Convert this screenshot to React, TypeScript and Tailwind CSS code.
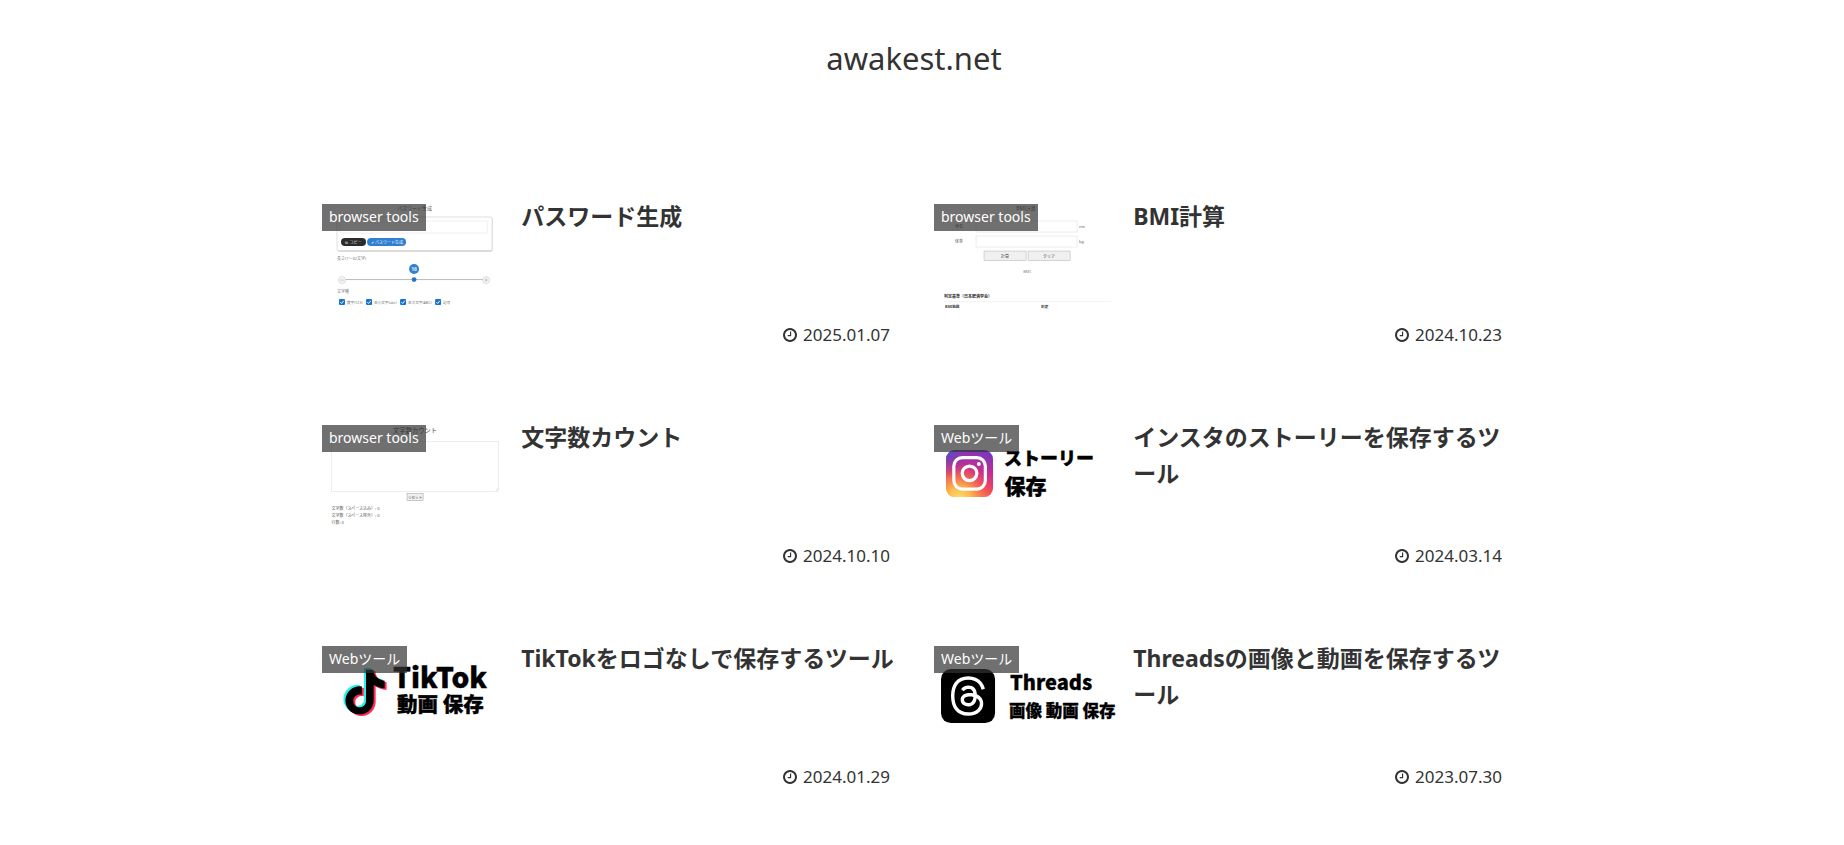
import type { ReactNode } from "react";
import { FaThreads } from "react-icons/fa6";
import { SiTiktok } from "react-icons/si";

const POP = "[font-family:'Noto_Sans_CJK_JP',sans-serif] font-black";
const TINY = "[font-family:'Noto_Sans','Noto_Sans_CJK_JP',sans-serif]";

function Thumb({ label, className, children }: { label: string; className: string; children: ReactNode }) {
  return (
    <svg viewBox="0 0 188 106" role="img" aria-label={label} className={`block w-full ${className}`}>
      {children}
    </svg>
  );
}

function PasswordThumb() {
  const checks = [
    { x: 17, label: "数字(123)" },
    { x: 44, label: "英小文字(abc)" },
    { x: 78, label: "英大文字(ABC)" },
    { x: 113, label: "記号" },
  ];
  return (
    <Thumb label="パスワード生成" className={TINY}>
      <text x="75" y="6" fontSize="5" fill="#555">パスワード生成</text>
      <rect x="15.5" y="14" width="155" height="34" rx="2" fill="#bbb" opacity="0.5" />
      <rect x="15" y="13" width="155" height="33.5" rx="2" fill="#fff" stroke="#d6d6d6" strokeWidth="0.8" />
      <rect x="18" y="17" width="147" height="12" fill="#fff" stroke="#e6e6e6" strokeWidth="0.6" />
      <rect x="19" y="34" width="25" height="8" rx="4" fill="#2b2b2b" />
      <text x="31.5" y="39.6" fontSize="4" fill="#ddd" textAnchor="middle">⧉ コピー</text>
      <rect x="45" y="34" width="39" height="8" rx="4" fill="#2f80d0" />
      <text x="65" y="39.6" fontSize="4" fill="#e4f0fc" textAnchor="middle">✔ パスワード生成</text>
      <text x="15" y="56" fontSize="4" fill="#777">長さ(1〜32文字)</text>
      <path d="M20 75.5H164" stroke="#aaa" strokeWidth="0.8" />
      <circle cx="20" cy="76" r="3.5" fill="#f4f4f4" stroke="#ccc" strokeWidth="0.6" />
      <circle cx="164" cy="76" r="3.5" fill="#f4f4f4" stroke="#ccc" strokeWidth="0.6" />
      <path d="M18.5 76h3M162.5 76h3M164 74.5v3" stroke="#999" strokeWidth="0.5" />
      <circle cx="92" cy="65" r="5" fill="#2f80d0" />
      <text x="92" y="67" fontSize="5" fontWeight="700" fill="#e4f0fc" textAnchor="middle">16</text>
      <circle cx="92" cy="75.5" r="2.4" fill="#2f72bd" />
      <text x="15" y="89" fontSize="4" fill="#777">文字種</text>
      {checks.map((c) => (
        <g key={c.x}>
          <rect x={c.x} y="95" width="6" height="6" rx="1" fill="#1673d1" />
          <path d={`M${c.x + 1.3} 98l1.3 1.4 2.2-2.8`} fill="none" stroke="#fff" strokeWidth="0.9" />
          <text x={c.x + 8} y="99.8" fontSize="3.6" fill="#777">{c.label}</text>
        </g>
      ))}
    </Thumb>
  );
}

function BmiThumb() {
  return (
    <Thumb label="BMI計算" className={TINY}>
      <text x="92" y="6" fontSize="5" fill="#555" textAnchor="middle">BMI計算</text>
      <g fill="#fff" stroke="#e4e4e4" strokeWidth="0.7">
        <rect x="42" y="17" width="101" height="11" />
        <rect x="42" y="32" width="101" height="11" />
      </g>
      <g fontSize="4" fill="#555">
        <text x="21" y="24">身長</text>
        <text x="21" y="39">体重</text>
        <text x="145" y="24">cm</text>
        <text x="145" y="39">kg</text>
      </g>
      <g fill="#f0f0f0" stroke="#bbb" strokeWidth="0.6">
        <rect x="50" y="47" width="42" height="9.5" />
        <rect x="94" y="47" width="42" height="9.5" />
      </g>
      <g fontSize="4" fill="#444" textAnchor="middle">
        <text x="71" y="53.5">計算</text>
        <text x="115" y="53.5">クリア</text>
        <text x="93" y="68.5" fill="#888">BMI</text>
      </g>
      <text x="10" y="93.8" fontSize="4" fontWeight="700" fill="#333">判定基準（日本肥満学会）</text>
      <path d="M10 97.5H177" stroke="#ececec" strokeWidth="0.6" />
      <text x="11" y="103.5" fontSize="3.6" fontWeight="700" fill="#444">BMI範囲</text>
      <text x="107" y="103.5" fontSize="3.6" fontWeight="700" fill="#444">判定</text>
    </Thumb>
  );
}

function CountThumb() {
  return (
    <Thumb label="文字数カウント" className={TINY}>
      <text x="71" y="7.5" fontSize="6.3" fill="#444">文字数カウント</text>
      <rect x="9.5" y="16.5" width="167" height="50" fill="#fff" stroke="#e6e6e6" strokeWidth="0.7" />
      <path d="M174 65.5l2-2" stroke="#999" strokeWidth="0.5" />
      <rect x="85" y="68.5" width="16" height="7" fill="#f0f0f0" stroke="#aaa" strokeWidth="0.6" />
      <text x="93" y="73.5" fontSize="3.6" fill="#444" textAnchor="middle">リセット</text>
      <g fontSize="4" fill="#555">
        <text x="9.5" y="85">文字数（スペース込み）: 0</text>
        <text x="9.5" y="91.8">文字数（スペース除外）: 0</text>
        <text x="9.5" y="98.7">行数: 0</text>
      </g>
    </Thumb>
  );
}

function InstagramThumb() {
  return (
    <Thumb label="ストーリー 保存" className={POP}>
      <defs>
        <linearGradient id="ig-base" x1="0.7" y1="0" x2="0.3" y2="1">
          <stop offset="0" stopColor="#7a35c0" />
          <stop offset="0.35" stopColor="#c52d92" />
          <stop offset="0.65" stopColor="#f0485a" />
          <stop offset="1" stopColor="#fb9a3c" />
        </linearGradient>
        <radialGradient id="ig-warm" cx="0.27" cy="1.05" r="0.75">
          <stop offset="0" stopColor="#ffe070" />
          <stop offset="0.35" stopColor="#fdb84c" />
          <stop offset="1" stopColor="#f0485a" stopOpacity="0" />
        </radialGradient>
        <radialGradient id="ig-cool" cx="0" cy="0" r="0.6">
          <stop offset="0" stopColor="#4452cf" />
          <stop offset="1" stopColor="#7a35c0" stopOpacity="0" />
        </radialGradient>
      </defs>
      <rect x="12" y="25" width="47" height="47" rx="9" fill="url(#ig-base)" />
      <rect x="12" y="25" width="47" height="47" rx="9" fill="url(#ig-warm)" />
      <rect x="12" y="25" width="47" height="47" rx="9" fill="url(#ig-cool)" />
      <g fill="none" stroke="#fff" strokeWidth="3.2">
        <rect x="19.8" y="32.5" width="31.5" height="31.5" rx="8.5" />
        <circle cx="35.5" cy="48.3" r="7.3" />
      </g>
      <circle cx="44.8" cy="39" r="2" fill="#fff" />
      <g fill="#000" stroke="#000" strokeWidth="0.4">
        <text x="70" y="39.5" fontSize="18">ストーリー</text>
        <text x="70.5" y="68.5" fontSize="21">保存</text>
      </g>
    </Thumb>
  );
}

function TikTokThumb() {
  return (
    <Thumb label="TikTok 動画 保存" className={POP}>
      <SiTiktok x={18.5} y={22} size={45} color="#25f4ee" />
      <SiTiktok x={22.5} y={25} size={45} color="#fe2c55" />
      <SiTiktok x={20.5} y={23.5} size={45} color="#000" />
      <g fill="#000" stroke="#000" strokeWidth="0.4">
        <text x="71" y="42" fontSize="28">TikTok</text>
        <text x="75" y="66" fontSize="20.5">動画 保存</text>
      </g>
    </Thumb>
  );
}

function ThreadsThumb() {
  return (
    <Thumb label="Threads 画像 動画 保存" className={POP}>
      <rect x="7" y="23" width="54" height="54" rx="10" fill="#000" />
      <FaThreads x={13} y={29} size={42} color="#fff" />
      <g fill="#000" stroke="#000" strokeWidth="0.3">
        <text x="76" y="43.5" fontSize="20">Threads</text>
        <text x="75" y="71" fontSize="16.5">画像 動画 保存</text>
      </g>
    </Thumb>
  );
}

function ClockIcon() {
  return (
    <svg viewBox="0 128 1536 1536" aria-hidden="true" className="size-[14px] fill-current">
      <path d="M896 544v448q0 14-9 23t-23 9h-320q-14 0-23-9t-9-23v-64q0-14 9-23t23-9h224v-352q0-14 9-23t23-9h64q14 0 23 9t9 23zm416 352q0-148-73-273t-198-198-273-73-273 73-198 198-73 273 73 273 198 198 273 73 273-73 198-198 73-273zm224 0q0 209-103 385.5t-279.5 279.5-385.5 103-385.5-103-279.5-279.5-103-385.5 103-385.5 279.5-279.5 385.5-103 385.5 103 279.5 279.5 103 385.5z" />
    </svg>
  );
}

const posts = [
  { title: "パスワード生成", category: "browser tools", date: "2025.01.07", Image: PasswordThumb },
  { title: "BMI計算", category: "browser tools", date: "2024.10.23", Image: BmiThumb },
  { title: "文字数カウント", category: "browser tools", date: "2024.10.10", Image: CountThumb },
  { title: "インスタのストーリーを保存するツール", category: "Webツール", date: "2024.03.14", Image: InstagramThumb },
  { title: "TikTokをロゴなしで保存するツール", category: "Webツール", date: "2024.01.29", Image: TikTokThumb },
  { title: "Threadsの画像と動画を保存するツール", category: "Webツール", date: "2023.07.30", Image: ThreadsThumb },
];

export default function App() {
  return (
    <div className="min-h-screen bg-white pb-12 text-[#333] [font-family:'Noto_Sans','Noto_Sans_CJK_JP',sans-serif]">
      <header className="flex justify-center pt-9 pr-4">
        <h1 className="text-[31px] leading-[44px]">
          <a href="#top">awakest.net</a>
        </h1>
      </header>
      <main className="mx-auto mt-[124px] grid max-w-[1248px] grid-cols-1 gap-x-6 gap-y-[79px] px-6 lg:grid-cols-2">
        {posts.map(({ title, category, date, Image }) => (
          <article key={title}>
            <a href="#post" className="flex gap-[11px]">
              <figure className="relative w-[32%] shrink-0">
                <Image />
                <figcaption className="absolute top-0 left-0 bg-[#333]/70 px-[7px] pb-0.5 text-[14px] leading-[25px] whitespace-nowrap text-white">
                  {category}
                </figcaption>
              </figure>
              <div className="flex min-h-[142px] min-w-0 flex-1 flex-col justify-between">
                <h2 className="-mt-1.5 text-[23px] leading-[36px] font-bold break-all">{title}</h2>
                <div className="flex items-center justify-end gap-1.5 pr-5 text-[17px] leading-[22px]">
                  <ClockIcon />
                  <time>{date}</time>
                </div>
              </div>
            </a>
          </article>
        ))}
      </main>
    </div>
  );
}
